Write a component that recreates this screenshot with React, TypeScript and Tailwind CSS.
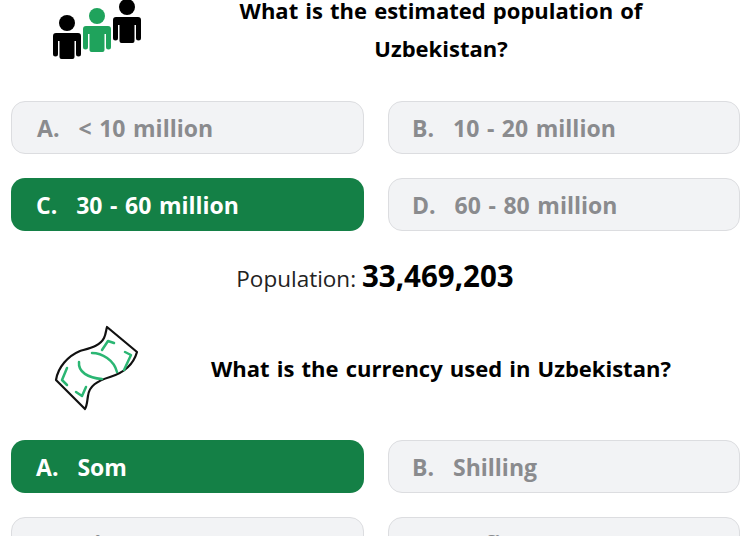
const font = "font-['Open_Sans','Noto_Sans',sans-serif]";

function clsxLite(...names: string[]) {
  return names.join(" ");
}

function Option({ letter, text, selected, right }: { letter: string; text: string; selected?: boolean; right?: boolean }) {
  return (
    <button
      className={clsxLite(
        "h-[53px] rounded-[14px] pt-[1px] flex items-center text-left text-[23px] font-bold [word-spacing:1.6px]",
        right ? "pl-[23px]" : "pl-[25px]",
        selected ? "bg-[#148046] text-white" : "border border-[#dcdde0] bg-[#f2f3f5] text-[#8a8b8e]"
      )}
    >
      <span className="mr-[19px]">{letter}.</span>
      <span>{text}</span>
    </button>
  );
}

function Person({ x, y, color }: { x: number; y: number; color: string }) {
  return (
    <g fill={color} transform={`translate(${x} ${y})`}>
      <circle cx="14" cy="-10" r="8" />
      <path d="M3 0H25a3 3 0 0 1 3 3V21a2.500 2.500 0 0 1-5 0V8H21.500V24a2 2 0 0 1-2 2H8.500a2 2 0 0 1-2-2V8H5V21a2.500 2.500 0 0 1-5 0V3a3 3 0 0 1 3-3z" />
    </g>
  );
}

function PeopleIcon() {
  return (
    <svg width="90" height="60" viewBox="52 -1 90 60">
      <Person x={53} y={33} color="#000" />
      <Person x={83} y={26} color="#1fa35c" />
      <Person x={113} y={17} color="#000" />
    </svg>
  );
}

function MoneyIcon() {
  return (
    <svg width="110" height="100" viewBox="0 0 110 100" fill="none" strokeLinecap="round" strokeLinejoin="round" strokeWidth="2.200">
      <path stroke="#111" d="M67 7L97 32C93 46 83 53 70 57C57 61 49 66 48 76C47 82 47 86 45 89L16 60C18 47 28 36 40 31C50 28 60 26 64 18C66 14 66 10 67 7Z" />
      <path stroke="#2bb673" strokeWidth="2.500" d="M62 30L68 21L74 23M52 33C62 33 74 40 77 52M85 32L91 35L84 50M39 42C38 52 48 58 62 59M27 48L22 60L27 65M36 72L42 76L46 67" />
    </svg>
  );
}

function Question({ icon, narrow, children }: { icon: React.ReactNode; narrow?: boolean; children: React.ReactNode }) {
  return (
    <div className="flex items-center">
      <div className="w-[132px] shrink-0 flex">{icon}</div>
      <h2
        className={
          narrow
            ? "flex-1 px-[90px] text-center text-[22px] font-bold leading-[38px] text-black [word-spacing:1.400px]"
            : "flex-1 text-center text-[22px] font-bold leading-[38px] text-black [word-spacing:1.400px]"
        }
      >
        {children}
      </h2>
    </div>
  );
}

export default function App() {
  return (
    <div className={`${font} h-[536px] w-[750px] overflow-hidden bg-white`}>
      <div className="-mt-[9px]">
        <Question narrow icon={<div className="pl-[52px]"><PeopleIcon /></div>}>
          What is the estimated population of Uzbekistan?
        </Question>
        <div className="mt-[34px] ml-[11px] grid grid-cols-[353px_352px] gap-[24px]">
          <Option letter="A" text="< 10 million" />
          <Option right letter="B" text="10 - 20 million" />
          <Option letter="C" text="30 - 60 million" selected />
          <Option right letter="D" text="60 - 80 million" />
        </div>
        <p className="mt-[24px] text-center text-[22.500px] leading-[42px] text-[#222]">
          Population: <span className="text-[29.500px] font-bold text-black">33,469,203</span>
        </p>
        <div className="mt-[22px] h-[92px] flex items-center">
          <div className="flex-1">
            <Question icon={<div className="pl-[40px] pt-[4px]"><MoneyIcon /></div>}>
              What is the currency used in Uzbekistan?
            </Question>
          </div>
        </div>
        <div className="mt-[26px] ml-[11px] grid grid-cols-[353px_352px] gap-[24px]">
          <Option letter="A" text="Som" selected />
          <Option right letter="B" text="Shilling" />
          <Option letter="C" text="Dinar" />
          <Option right letter="D" text="Rufiyaa" />
        </div>
      </div>
    </div>
  );
}
